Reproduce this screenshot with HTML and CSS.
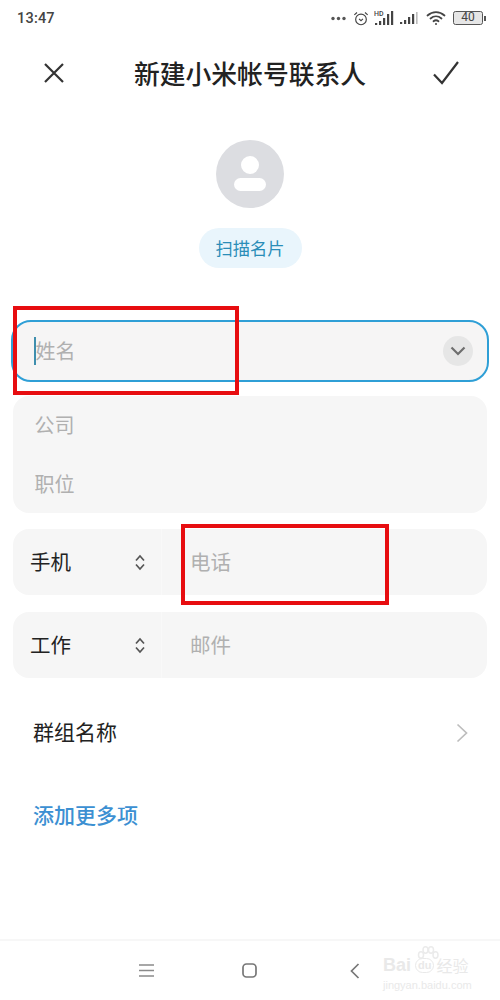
FILE: index.html
```html
<!DOCTYPE html>
<html lang="zh-CN">
<head>
<meta charset="utf-8">
<title>新建小米帐号联系人</title>
<link rel="stylesheet" href="styles.css">
</head>
<body>
<div class="screen">
  <div class="status">
    <span class="time">13:47</span>
    <div class="status-icons">
      <svg class="s-dots" width="15" height="5" viewBox="0 0 15 5"><circle cx="2" cy="2.5" r="1.7"/><circle cx="7.5" cy="2.5" r="1.7"/><circle cx="13" cy="2.5" r="1.7"/></svg>
      <svg width="16" height="17" viewBox="0 0 18 18" fill="none" stroke="#444" stroke-width="1.3"><circle cx="9" cy="10" r="6"/><path d="M6.8 9.5 9 11.5l2.2-2"/><path d="M1.5 5 4.5 2.3M16.500 5l-3-2.700"/></svg>
      <svg width="21" height="16" viewBox="0 0 21 16"><text x="0" y="6" class="hd">HD</text><rect x="1" y="13" width="2.200" height="2" fill="#444"/><rect x="5" y="11" width="2.200" height="4" fill="#444"/><rect x="9" y="8" width="2.200" height="7" fill="#444"/><rect x="13" y="4" width="2.200" height="11" fill="#444"/><rect x="17" y="1" width="2.200" height="14" fill="#444"/></svg>
      <svg width="19" height="14" viewBox="0 0 19 14"><rect x="0" y="11" width="2.200" height="2" fill="#444"/><rect x="4" y="9" width="2.200" height="4" fill="#444"/><rect x="8" y="6" width="2.200" height="7" fill="#444"/><rect x="12" y="3" width="2.200" height="10" fill="#444"/><rect x="16" y="1" width="1.600" height="12" fill="#bbb"/></svg>
      <svg class="s-wifi" width="20" height="16" viewBox="0 0 20 16" fill="none" stroke="#444" stroke-width="1.800" stroke-linecap="round"><path d="M1.500 5.500C6.500 1 13.500 1 18.500 5.500"/><path d="M4.500 8.500c3.300-2.800 7.700-2.800 11 0"/><path d="M7.500 11.300c1.500-1.200 3.500-1.200 5 0"/><circle cx="10" cy="14" r="1" fill="#444" stroke="none"/></svg>
      <div class="battery"><span class="battery-body">40</span><span class="battery-nub"></span></div>
    </div>
  </div>

  <header class="topbar">
    <svg class="icon-close" width="22" height="22" viewBox="0 0 22 22" fill="none" stroke="#333" stroke-width="2.200"><path d="M2 2l18 18M20 2 2 20"/></svg>
    <h1 class="title">新建小米帐号联系人</h1>
    <svg class="icon-check" width="26" height="24" viewBox="0 0 26 24" fill="none" stroke="#333" stroke-width="2.200"><path d="M1 13.500 9 22 25 1"/></svg>
  </header>

  <div class="avatar-block">
    <div class="avatar">
      <svg width="68" height="68" viewBox="0 0 68 68" fill="#fff"><circle cx="34" cy="25" r="9"/><rect x="18" y="38" width="32" height="13" rx="6.500"/></svg>
    </div>
    <div class="scan">扫描名片</div>
  </div>

  <div class="name-field">
    <span class="caret"></span>
    <span class="ph">姓名</span>
    <span class="expand"><svg width="16" height="10" viewBox="0 0 16 10" fill="none" stroke="#6e6e6e" stroke-width="2.200"><path d="M1.500 1.500 8 8l6.500-6.500"/></svg></span>
  </div>

  <div class="group">
    <div class="group-row ph">公司</div>
    <div class="group-row ph">职位</div>
  </div>

  <div class="pair pair-phone">
    <div class="pair-type">
      <span class="type-label">手机</span>
      <svg width="12" height="17" viewBox="0 0 12 17" fill="none" stroke="#555" stroke-width="1.700"><path d="M2 6.500 6 2l4 4.500M2 10.500 6 15l4-4.500"/></svg>
    </div>
    <div class="pair-value ph">电话</div>
  </div>

  <div class="pair pair-mail">
    <div class="pair-type">
      <span class="type-label">工作</span>
      <svg width="12" height="17" viewBox="0 0 12 17" fill="none" stroke="#555" stroke-width="1.700"><path d="M2 6.500 6 2l4 4.500M2 10.500 6 15l4-4.500"/></svg>
    </div>
    <div class="pair-value ph">邮件</div>
  </div>

  <div class="group-name">
    <span class="group-label">群组名称</span>
    <svg width="12" height="20" viewBox="0 0 12 20" fill="none" stroke="#bdbdbd" stroke-width="1.700"><path d="M1.500 1.500 10.500 10l-9 8.500"/></svg>
  </div>

  <div class="add-more">添加更多项</div>

  <nav class="navbar">
    <svg width="15" height="13" viewBox="0 0 15 13" stroke="#8a8a8a" stroke-width="1.400"><path d="M0 1h15M0 6.500h15M0 12h15"/></svg>
    <svg class="nav-home" width="15" height="15" viewBox="0 0 15 15" fill="none" stroke="#777" stroke-width="1.700"><rect x="1" y="1" width="13" height="13" rx="3.500"/></svg>
    <svg width="10" height="16" viewBox="0 0 10 16" fill="none" stroke="#777" stroke-width="1.700"><path d="M8.500 1 1.500 8l7 7"/></svg>
  </nav>

  <div class="watermark">
    <svg class="wm-paw" width="22" height="18" viewBox="0 0 22 18" fill="none" stroke="#ebebeb" stroke-width="1.500"><ellipse cx="4" cy="9" rx="2.500" ry="3.200"/><ellipse cx="8.500" cy="4" rx="2.500" ry="3.200"/><ellipse cx="14" cy="4" rx="2.500" ry="3.200"/><ellipse cx="18.500" cy="9" rx="2.500" ry="3.200"/></svg>
    <div class="wm-main">Bai<span class="wm-du">du</span><span class="wm-cn">经验</span></div>
    <div class="wm-url">jingyan.baidu.com</div>
  </div>

  <div class="mark mark-name"></div>
  <div class="mark mark-phone"></div>
</div>
</body>
</html>
```
FILE: styles.css
```css
* { box-sizing: border-box; margin: 0; padding: 0; }
body {
  background: #fff;
  font-family: "Noto Sans CJK SC", "Noto Sans", sans-serif;
  color: #222;
}
.screen {
  position: relative;
  width: 500px;
  height: 1000px;
  overflow: hidden;
  display: flex;
  flex-direction: column;
  background: #fff;
}
.status {
  height: 36px;
  flex: none;
  display: flex;
  align-items: center;
  justify-content: space-between;
  padding: 0 14px 0 17px;
}
.time {
  font-family: Roboto, "Noto Sans", sans-serif;
  font-size: 14.500px;
  font-weight: 500;
  color: #444;
  letter-spacing: 0.2px;
}
.status-icons {
  display: flex;
  align-items: center;
  gap: 5px;
}
.s-dots { fill: #555; margin-right: 2px; }
.s-wifi { margin-left: 2px; }
.hd {
  font-family: Roboto, sans-serif;
  font-size: 7px;
  font-weight: 500;
  fill: #444;
}
.battery { display: flex; align-items: center; gap: 1px; margin-left: 2px; }
.battery-body {
  width: 30px;
  height: 14px;
  border: 1.500px solid #555;
  border-radius: 2.500px;
  background: #e6e6e6;
  font-family: Roboto, sans-serif;
  font-size: 12px;
  line-height: 11px;
  text-align: center;
  color: #444;
}
.battery-nub { width: 2px; height: 5px; background: #555; }

.topbar {
  height: 74px;
  flex: none;
  display: flex;
  align-items: center;
  justify-content: space-between;
  padding: 0 41px 0 43px;
}
.title {
  font-size: 25.800px;
  font-weight: 500;
  line-height: 36px;
  color: #222;
  margin-left: 2px;
}

.avatar-block {
  flex: none;
  margin-top: 30px;
  display: flex;
  flex-direction: column;
  align-items: center;
  gap: 20px;
  padding-right: 1px;
}
.avatar {
  width: 68px;
  height: 68px;
  border-radius: 50%;
  background: #dcdde1;
}
.avatar svg { display: block; }
.scan {
  width: 103px;
  height: 40px;
  margin-left: 1px;
  border-radius: 20px;
  background: #e9f5fc;
  color: #2a8db8;
  font-size: 17.300px;
  line-height: 40px;
  text-align: center;
}

.ph { color: #b0b0b0; font-size: 20px; }

.name-field {
  flex: none;
  margin: 52px 11px 0;
  height: 62px;
  padding: 0 14px 0 20.500px;
  border: 2.500px solid #2f9fd6;
  border-radius: 20px;
  background: #f6f5f5;
  display: flex;
  align-items: center;
}
.caret {
  width: 2px;
  height: 28px;
  background: #3f8fae;
  flex: none;
}
.name-field .ph { flex: 1; margin-bottom: 2px; }
.expand {
  width: 30px;
  height: 30px;
  border-radius: 50%;
  background: #e6e6e6;
  display: flex;
  align-items: center;
  justify-content: center;
}

.group {
  flex: none;
  margin: 14px 13px 0;
  height: 117px;
  border-radius: 16px;
  background: #f6f6f6;
  padding: 0 21.500px 1px;
  display: flex;
  flex-direction: column;
  justify-content: center;
  gap: 29px;
}
.group-row { line-height: 30px; }

.pair {
  flex: none;
  margin: 16px 13px 0;
  height: 66px;
  border-radius: 16px;
  background: #f6f6f6;
  display: flex;
}
.pair-mail { margin-top: 17px; }
.pair-type {
  width: 149px;
  padding: 0 15px 0 17px;
  display: flex;
  align-items: center;
  justify-content: space-between;
  border-right: 1px solid #f9f9f9;
}
.type-label { font-size: 20.500px; color: #222; margin-bottom: 2px; }
.pair-value {
  flex: 1;
  padding: 0 0 2px 28px;
  display: flex;
  align-items: center;
  font-size: 20.500px;
}

.group-name {
  flex: none;
  margin-top: 35px;
  height: 40px;
  padding: 0 32px 0 33px;
  display: flex;
  align-items: center;
  justify-content: space-between;
  font-size: 21px;
  color: #222;
}
.group-label { margin-bottom: 4px; }
.add-more {
  flex: none;
  margin-top: 41px;
  padding-left: 33px;
  font-size: 21px;
  font-weight: 500;
  line-height: 40px;
  color: #3c90d2;
}

.navbar {
  margin-top: auto;
  height: 61px;
  flex: none;
  border-top: 2px solid #f7f7f7;
  display: flex;
  align-items: center;
  gap: 88px;
  padding-left: 139px;
}
.navbar svg { display: block; }
.nav-home { margin-right: 5px; }

.watermark {
  position: absolute;
  left: 383px;
  top: 954px;
  width: 90px;
  color: #e9e9e9;
  font-family: "Liberation Sans", sans-serif;
}
.wm-paw { position: absolute; left: 34px; top: -8px; }
.wm-main {
  font-size: 18px;
  font-weight: 700;
  line-height: 22px;
  white-space: nowrap;
  display: flex;
  align-items: center;
}
.wm-du {
  font-size: 11px;
  margin: 0 2px 0 4px;
  padding: 0 2px;
  border-radius: 8px;
  line-height: 13px;
  border: 1px solid #e9e9e9;
}
.wm-cn {
  font-family: "Noto Sans CJK SC", sans-serif;
  font-size: 16px;
  font-weight: 400;
}
.wm-url { font-size: 11px; line-height: 13px; margin-top: 3px; white-space: nowrap; }

.mark {
  position: absolute;
  border: 4px solid #e70d10;
  pointer-events: none;
}
.mark-name { left: 13px; top: 306px; width: 226px; height: 89px; }
.mark-phone { left: 181px; top: 524px; width: 208px; height: 81px; }
```
